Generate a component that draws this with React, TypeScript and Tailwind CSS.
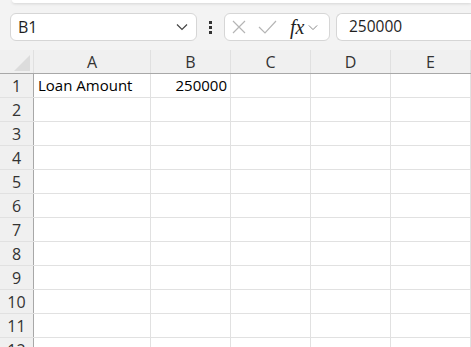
import React from "react";

const cols = ["A", "B", "C", "D", "E"];
const colW = ["w-[117px]", "w-[80px]", "w-[80px]", "w-[80px]", "w-[80px]"];
const rows = Array.from({ length: 12 }, (_, i) => i + 1);

function Chevron({ className }: { className?: string }) {
  return (
    <svg className={className} viewBox="0 0 12 8" fill="none" stroke="currentColor" strokeWidth="1.2">
      <path d="M1 1.5 L6 6.5 L11 1.5" />
    </svg>
  );
}

export default function App() {
  const font = { fontFamily: '"Open Sans", "Noto Sans", sans-serif' };
  return (
    <div className="w-[471px] h-[347px] overflow-hidden bg-[#f3f3f3] text-[#1f1f1f]" style={font}>
      {/* ribbon edge */}
      <div className="ml-[12px] h-[3px] bg-white rounded-bl-[6px] shadow-[0_1px_3px_rgba(0,0,0,0.12)]" />
      {/* formula bar */}
      <div className="flex items-center mt-[10px] h-[28px] pl-[10px]">
        <div className="flex items-center w-[187px] h-[28px] bg-white border border-[#d6d6d6] rounded-[6px] pl-[7px] pr-[8px]">
          <span className="flex-1 text-[16px] leading-none">B1</span>
          <Chevron className="w-[12px] h-[8px] text-[#444]" />
        </div>
        <div className="flex flex-col items-center justify-center gap-[2px] w-[27px]">
          <div className="w-[3px] h-[3px] bg-[#333]" />
          <div className="w-[3px] h-[3px] bg-[#333]" />
          <div className="w-[3px] h-[3px] bg-[#333]" />
        </div>
        <div className="flex items-center w-[106px] h-[28px] bg-white border border-[#d6d6d6] rounded-[6px] pl-[7px]">
          <svg className="w-[14px] h-[14px] text-[#b5b5b5]" viewBox="0 0 14 14" fill="none" stroke="currentColor" strokeWidth="1.2">
            <path d="M1 1 L13 13 M13 1 L1 13" />
          </svg>
          <svg className="ml-[12px] w-[19px] h-[14px] text-[#b5b5b5]" viewBox="0 0 19 14" fill="none" stroke="currentColor" strokeWidth="1.2">
            <path d="M1 7 L7 13 L18 1" />
          </svg>
          <span className="ml-[13px] text-[20px] italic leading-none text-[#222]" style={{ fontFamily: '"Liberation Serif", serif' }}>
            fx
          </span>
          <Chevron className="ml-[4px] w-[10px] h-[7px] text-[#888]" />
        </div>
        <div className="flex items-center flex-1 h-[28px] ml-[6px] bg-white border border-[#d6d6d6] border-r-0 rounded-l-[6px] pl-[12px] text-[15.5px]">
          250000
        </div>
      </div>
      {/* grid */}
      <div className="mt-[9px]">
        <div className="flex h-[24px] border-b border-[#a8a8a8] bg-[#f0f0f0]">
          <div className="relative w-[34px] h-full border-r border-[#e0e0e0]">
            <div className="absolute right-[3px] bottom-[2px] w-0 h-0 border-l-[16px] border-l-transparent border-b-[16px] border-b-[#dcdcdc]" />
          </div>
          {cols.map((c, i) => (
            <div key={c} className={`${colW[i]} shrink-0 h-full border-r border-[#e0e0e0] flex items-center justify-center text-[16px] text-[#333]`}>
              {c}
            </div>
          ))}
        </div>
        {rows.map((r) => (
          <div key={r} className="flex h-[24px] border-b border-[#e1e1e1] bg-white">
            <div className="w-[34px] shrink-0 h-full bg-[#f0f0f0] border-r border-[#a8a8a8] flex items-center justify-center text-[16px] text-[#333]">
              {r}
            </div>
            {cols.map((c, i) => (
              <div key={c} className={`${colW[i]} shrink-0 h-full border-r border-[#e1e1e1] flex items-center px-[4px] text-[15px] text-black`}>
                {r === 1 && c === "A" ? <span>Loan Amount</span> : null}
                {r === 1 && c === "B" ? <span className="ml-auto mr-[-1px]">250000</span> : null}
              </div>
            ))}
          </div>
        ))}
      </div>
    </div>
  );
}
